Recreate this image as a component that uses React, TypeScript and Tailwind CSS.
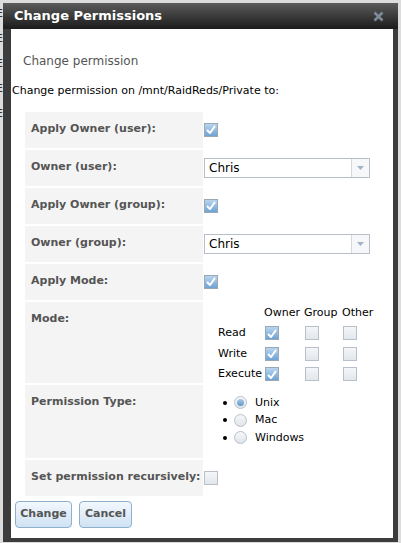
import React from "react";

const font = { fontFamily: '"DejaVu Sans", Verdana, sans-serif' };

function Check({ on = false }: { on?: boolean }) {
  return (
    <span
      className={
        "inline-flex h-[14px] w-[14px] items-center justify-center border " +
        (on
          ? "border-[#9aa7b5] bg-gradient-to-b from-[#b9d5ee] to-[#6ea3d3]"
          : "border-[#b8bfc8] bg-gradient-to-b from-[#f4f6f8] to-[#e2e7ec]")
      }
    >
      {on ? (
        <svg width="10" height="9" viewBox="0 0 10 9">
          <path d="M1 5 L4 8 L9 1" fill="none" stroke="#fff" strokeWidth="2" />
        </svg>
      ) : null}
    </span>
  );
}

function Radio({ on = false }: { on?: boolean }) {
  return (
    <span className="inline-flex h-[13px] w-[13px] items-center justify-center rounded-full border border-[#b8bfc8] bg-gradient-to-b from-[#f6f8fa] to-[#dfe5ea]">
      {on ? <span className="h-[7px] w-[7px] rounded-full bg-gradient-to-b from-[#a9cbe8] to-[#5d97c8]" /> : null}
    </span>
  );
}

function Select({ value }: { value: string }) {
  return (
    <div className="flex h-[20px] w-[166px] items-center border border-[#b6bfca] bg-white">
      <span className="flex-1 pl-[4px] text-[12px] text-black">{value}</span>
      <span className="flex h-full w-[18px] items-center justify-center border-l border-[#d3d9df] bg-[#f6f7f8]">
        <svg width="7" height="4" viewBox="0 0 7 4">
          <path d="M0 0 H7 L3.5 4 Z" fill="#9fb3c8" />
        </svg>
      </span>
    </div>
  );
}

function Row({
  label,
  h,
  top = false,
  children,
}: {
  label: string;
  h: number;
  top?: boolean;
  children: React.ReactNode;
}) {
  return (
    <div className="flex" style={{ height: h }}>
      <div
        className={
          "flex w-[178px] shrink-0 bg-[#f4f4f4] pl-[6px] text-[11px] font-bold text-[#555] " +
          (top ? "items-start pt-[9px]" : "items-center")
        }
      >
        {label}
      </div>
      <div className={"flex flex-1 pl-[1px] " + (top ? "items-start" : "items-center")}>{children}</div>
    </div>
  );
}

export default function App() {
  return (
    <div className="relative h-[543px] w-[401px] overflow-hidden bg-[#dcdcdc]" style={font}>
      <div className="absolute left-0 top-0 flex flex-col gap-[14px] pt-[8px] text-[11px] text-[#333]">
        {["E", "E", "E", "E", "E"].map((e, i) => (
          <span key={i} className="-ml-[4px] leading-[11px]">
            {e}
          </span>
        ))}
      </div>
      <div className="absolute left-[3px] top-[3px] flex h-[539px] w-[395px] flex-col bg-[#3c3c3c] pb-[4px] pl-[8px] pr-[5px]">
        <div className="-ml-[8px] -mr-[5px] flex h-[26px] shrink-0 items-center justify-between bg-gradient-to-b from-[#5c5c5c] to-[#1c1c1c] pl-[11px] pr-[14px]">
          <span className="text-[13px] font-bold text-white">Change Permissions</span>
          <svg width="11" height="11" viewBox="0 0 11 11">
            <path d="M1.5 1.5 L9.5 9.5 M9.5 1.5 L1.5 9.5" stroke="#7d8b99" strokeWidth="2.6" />
          </svg>
        </div>
        <div className="flex flex-1 flex-col bg-white pl-[1px]">
          <div className="pl-[11px] pt-[23px] text-[12px] text-[#555]">Change permission</div>
          <div className="pt-[13px] text-[11px] text-black">Change permission on /mnt/RaidReds/Private to:</div>
          <div className="flex flex-col gap-[2px] pl-[13px] pt-[12px]">
            <Row label="Apply Owner (user):" h={36}>
              <Check on />
            </Row>
            <Row label="Owner (user):" h={36}>
              <Select value="Chris" />
            </Row>
            <Row label="Apply Owner (group):" h={36}>
              <Check on />
            </Row>
            <Row label="Owner (group):" h={36}>
              <Select value="Chris" />
            </Row>
            <Row label="Apply Mode:" h={36}>
              <Check on />
            </Row>
            <Row label="Mode:" h={81} top>
              <div className="grid grid-cols-[47px_40px_38px_30px] items-center gap-y-[4px] pl-[14px] pt-[3px] text-[11px] text-black">
                <span />
                <span className="-ml-[1px]">Owner</span>
                <span className="-ml-[1px]">Group</span>
                <span className="-ml-[1px]">Other</span>
                {["Read", "Write", "Execute"].map((r) => (
                  <React.Fragment key={r}>
                    <span>{r}</span>
                    <Check on />
                    <Check />
                    <Check />
                  </React.Fragment>
                ))}
              </div>
            </Row>
            <Row label="Permission Type:" h={73} top>
              <ul className="flex flex-col gap-[1px] pl-[19px] pt-[10px] text-[11px] text-black">
                {["Unix", "Mac", "Windows"].map((t, i) => (
                  <li key={t} className="flex items-center gap-[7px]">
                    <span className="h-[4px] w-[4px] rounded-full bg-black" />
                    <Radio on={i === 0} />
                    <span className="pl-[1px]">{t}</span>
                  </li>
                ))}
              </ul>
            </Row>
            <Row label="Set permission recursively:" h={36}>
              <Check />
            </Row>
          </div>
          <div className="flex gap-[7px] pl-[3px] pt-[5px]">
            {["Change", "Cancel"].map((b) => (
              <button
                key={b}
                className={
                  "h-[27px] rounded-[4px] border border-[#8fb0cc] bg-gradient-to-b from-[#f3f8fd] to-[#cfe2f3] text-[11px] font-bold text-[#555] " +
                  (b === "Change" ? "w-[57px]" : "w-[53px]")
                }
                style={font}
              >
                {b}
              </button>
            ))}
          </div>
        </div>
      </div>
    </div>
  );
}
